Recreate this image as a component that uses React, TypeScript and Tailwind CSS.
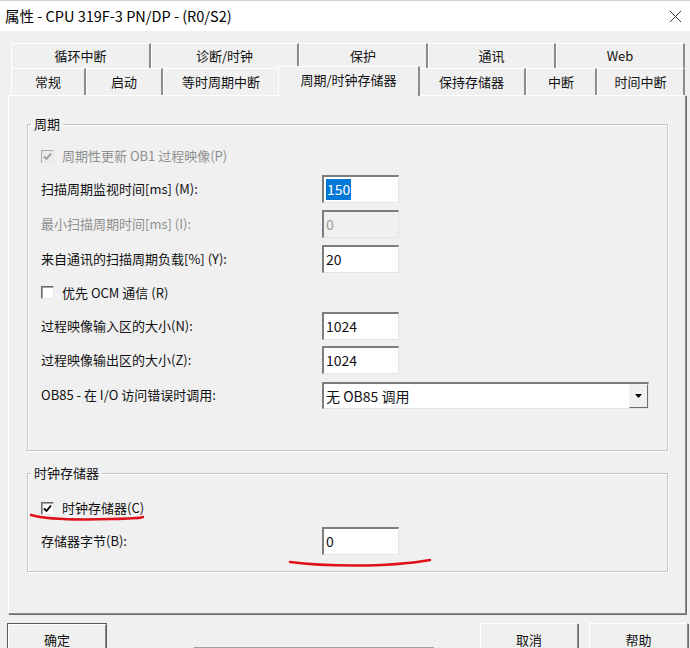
import React from "react";

const Check = ({ checked, disabled }: { checked?: boolean; disabled?: boolean }) => (
  <span
    className={
      disabled
        ? "flex h-[13px] w-[13px] shrink-0 items-center justify-center border border-t-[#a8a8a8] border-l-[#a8a8a8] border-r-[#e6e6e6] border-b-[#e6e6e6] bg-[#eaeaea]"
        : "flex h-[13px] w-[13px] shrink-0 items-center justify-center border border-t-[#6d6d6d] border-l-[#6d6d6d] border-r-[#e6e6e6] border-b-[#e6e6e6] bg-white shadow-[inset_1px_1px_0_#a0a0a0]"
    }
  >
    {checked && (
      <svg width="9" height="9" viewBox="0 0 9 9">
        <path
          d="M1 4.5 L3.5 7 L8 1.5"
          fill="none"
          stroke={disabled ? "#9a9a9a" : "#000"}
          strokeWidth="1.8"
        />
      </svg>
    )}
  </span>
);

const Field = ({ children, disabled }: { children?: React.ReactNode; disabled?: boolean }) => (
  <div
    className={
      (disabled ? "bg-[#f0f0f0] text-[#9a9a9a] " : "bg-white text-[#111] ") +
      "flex h-[28px] w-[77px] items-center border-t-2 border-l-2 border-r border-b border-t-[#7d7d7d] border-l-[#7d7d7d] border-r-[#e3e3e3] border-b-[#e3e3e3] pl-[2px] text-[14px]"
    }
  >
    {children}
  </div>
);

const Label = ({ text, disabled }: { text: string; disabled?: boolean }) => (
  <span className={(disabled ? "text-[#8f8f8f] " : "text-[#111] ") + "w-[281px] shrink-0 text-[13px]"}>
    {text}
  </span>
);

const backTabs = [
  { t: "循环中断", w: "w-[140px]" },
  { t: "诊断/时钟", w: "w-[148px]" },
  { t: "保护", w: "w-[129px]" },
  { t: "通讯", w: "w-[128px]" },
  { t: "Web", w: "w-[129px]" },
];

const frontTabs = [
  { t: "常规", w: "w-[75px]" },
  { t: "启动", w: "w-[77px]" },
  { t: "等时周期中断", w: "w-[117px]" },
  { t: "周期/时钟存储器", w: "w-[142px]", active: true },
  { t: "保持存储器", w: "w-[108px]" },
  { t: "中断", w: "w-[71px]" },
  { t: "时间中断", w: "w-[88px]" },
];

const tabBase =
  "flex items-center justify-center border-t border-l border-t-white border-l-white border-r-2 border-r-[#8c8c8c] text-[13px] text-[#111]";

export default function App() {
  return (
    <div className="relative h-[648px] w-[690px] overflow-hidden bg-[#f0f0f0] font-['Noto_Sans_CJK_SC','Noto_Sans',sans-serif] text-[13px] leading-[18px]">
      {/* title bar */}
      <div className="flex h-[31px] items-center justify-between border-t border-t-[#d0d0d0] bg-white pl-[5px] pr-[8px]">
        <span className="text-[14.5px] text-black">属性 - CPU 319F-3 PN/DP - (R0/S2)</span>
        <svg width="13" height="13" viewBox="0 0 13 13">
          <path d="M1 1 L12 12 M12 1 L1 12" stroke="#333" strokeWidth="1" fill="none" />
        </svg>
      </div>

      {/* tabs */}
      <div className="mt-[12px] pl-[11px]">
        <div className="flex h-[25px]">
          {backTabs.map((b) => (
            <div key={b.t} className={tabBase + " " + b.w + " h-full"}>
              {b.t}
            </div>
          ))}
        </div>
        <div className="flex h-[27px]">
          {frontTabs.map((b) =>
            b.active ? (
              <div
                key={b.t}
                className={tabBase + " " + b.w + " relative z-10 -mx-[2px] -mt-[2px] h-[30px] self-start bg-[#f0f0f0] pb-[3px]"}
              >
                {b.t}
              </div>
            ) : (
              <div key={b.t} className={tabBase + " " + b.w + " h-full"}>
                {b.t}
              </div>
            )
          )}
        </div>
      </div>

      {/* panel */}
      <div className="ml-[8px] h-[519px] w-[678px] border border-t-white border-l-white border-r-[#8c8c8c] border-b-[#8c8c8c] pt-[19px] shadow-[1px_1px_0_#6d6d6d]">
        <fieldset className="ml-[18px] w-[641px] border border-[#c4c4c4] px-[13px] pt-[7px] pb-[37px] shadow-[inset_1px_1px_0_#fff,1px_1px_0_#fff]">
          <legend className="-ml-[10px] px-[3px] text-[13px] leading-[18px] text-[#111]">周期</legend>

          <div className="flex h-[32px] items-center gap-[8px]">
            <Check checked disabled />
            <span className="text-[#8f8f8f]">周期性更新 OB1 过程映像(P)</span>
          </div>
          <div className="flex h-[34px] items-center">
            <Label text="扫描周期监视时间[ms] (M):" />
            <Field>
              <span className="bg-[#0078d7] px-[1px] leading-[21px] text-white">150</span>
            </Field>
          </div>
          <div className="flex h-[35px] items-center">
            <Label text="最小扫描周期时间[ms] (I):" disabled />
            <Field disabled>0</Field>
          </div>
          <div className="flex h-[35px] items-center">
            <Label text="来自通讯的扫描周期负载[%] (Y):" />
            <Field>20</Field>
          </div>
          <div className="flex h-[33px] items-center gap-[8px]">
            <Check />
            <span className="text-[#111]">优先 OCM 通信 (R)</span>
          </div>
          <div className="flex h-[33px] items-center">
            <Label text="过程映像输入区的大小(N):" />
            <Field>1024</Field>
          </div>
          <div className="flex h-[35px] items-center">
            <Label text="过程映像输出区的大小(Z):" />
            <Field>1024</Field>
          </div>
          <div className="flex h-[36px] items-center">
            <Label text="OB85 - 在 I/O 访问错误时调用:" />
            <div className="flex h-[27px] w-[327px] items-stretch border-t-2 border-l-2 border-r border-b border-t-[#7d7d7d] border-l-[#7d7d7d] border-r-[#e3e3e3] border-b-[#e3e3e3] bg-white">
              <span className="flex flex-1 items-center pl-[2px] text-[14px] text-[#111]">无 OB85 调用</span>
              <span className="flex w-[19px] items-center justify-center border border-t-[#f4f4f4] border-l-[#f4f4f4] border-r-[#6d6d6d] border-b-[#6d6d6d] bg-[#f0f0f0]">
                <svg width="7" height="4" viewBox="0 0 7 4">
                  <path d="M0 0 H7 L3.5 4 Z" fill="#000" />
                </svg>
              </span>
            </div>
          </div>
        </fieldset>

        <fieldset className="ml-[18px] mt-[13px] w-[641px] border border-[#c4c4c4] px-[13px] pt-[10px] pb-[14px] shadow-[inset_1px_1px_0_#fff,1px_1px_0_#fff]">
          <legend className="-ml-[10px] px-[3px] text-[13px] leading-[18px] text-[#111]">时钟存储器</legend>
          <div className="flex h-[32px] items-center gap-[8px]">
            <Check checked />
            <span className="text-[#111]">时钟存储器(C)</span>
          </div>
          <div className="flex h-[33px] items-center">
            <Label text="存储器字节(B):" />
            <Field>0</Field>
          </div>
        </fieldset>
      </div>

      {/* buttons */}
      <div className="mt-[9px] flex h-[30px] items-start">
        <button className="ml-[7px] h-[30px] w-[100px] border border-[#5a5a5a] bg-[#f0f0f0] pt-[3px] text-[13px] text-[#111] shadow-[inset_1px_1px_0_#fff,inset_-1px_-1px_0_#8c8c8c]">
          确定
        </button>
        <div className="ml-[87px] mt-[24px] h-[6px] w-[240px] border-t border-l border-t-[#a0a0a0] border-l-[#a0a0a0]" />
        <button className="ml-[46px] h-[30px] w-[98px] border border-t-white border-l-white border-r-[#8c8c8c] border-b-[#8c8c8c] bg-[#f0f0f0] pt-[3px] text-[13px] text-[#111] shadow-[1px_1px_0_#6d6d6d]">
          取消
        </button>
        <button className="ml-[11px] h-[30px] w-[99px] border border-t-white border-l-white border-r-[#8c8c8c] border-b-[#8c8c8c] bg-[#f0f0f0] pt-[3px] text-[13px] text-[#111] shadow-[1px_1px_0_#6d6d6d]">
          帮助
        </button>
      </div>

      {/* red hand-drawn marks */}
      <svg className="pointer-events-none absolute left-0 top-0" width="690" height="648" viewBox="0 0 690 648">
        <path
          d="M31 515 C 45 519, 80 520, 112 519 S 138 518, 143 517"
          fill="none"
          stroke="#e0101a"
          strokeWidth="2.5"
          strokeLinecap="round"
        />
        <path
          d="M290 562 C 320 566, 385 568, 430 560"
          fill="none"
          stroke="#e0101a"
          strokeWidth="2.5"
          strokeLinecap="round"
        />
      </svg>
    </div>
  );
}
